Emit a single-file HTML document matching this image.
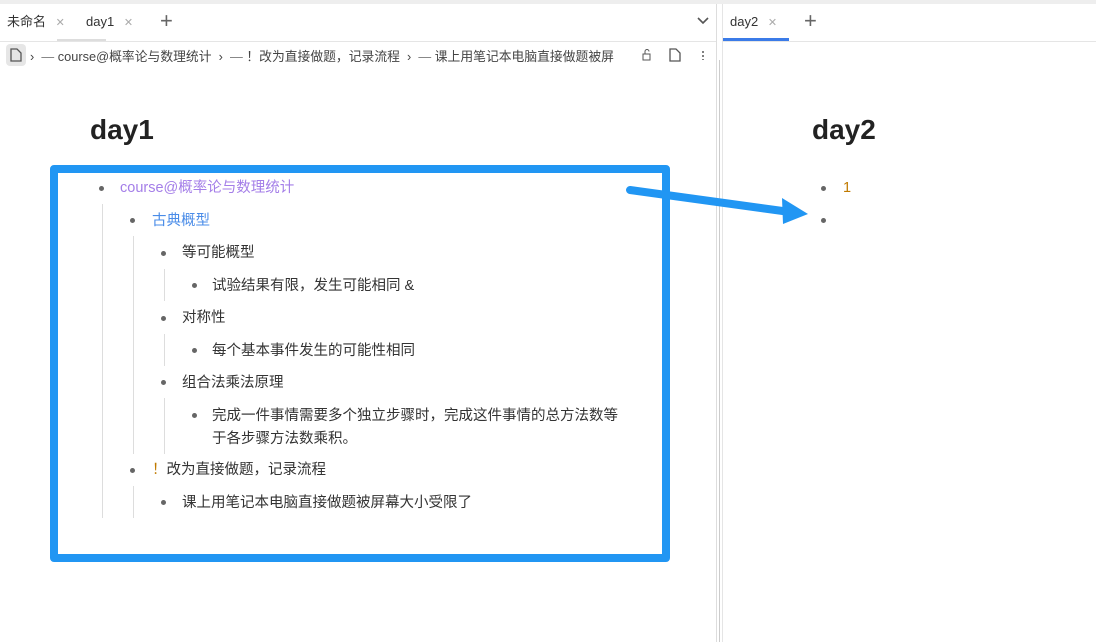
<!DOCTYPE html><html><head><meta charset="utf-8"><style>
body{margin:0;width:1096px;height:642px;overflow:hidden;background:#fff;font-family:"Liberation Sans","Noto Sans CJK SC",sans-serif;color:#333;position:relative}
.a{position:absolute;white-space:nowrap}
.t{font-size:14.5px;line-height:20px}
.dot{position:absolute;width:5px;height:5px;border-radius:50%;background:#666}
.vl{position:absolute;width:1px;background:#ddd}
</style></head><body>
<div class="a" style="left:0;top:0;width:1096px;height:4px;background:#eee"></div>
<div class="a" style="left:0;top:41px;width:717px;height:1px;background:#e5e5e5"></div>
<div class="a" style="left:722px;top:41px;width:374px;height:1px;background:#e5e5e5"></div>
<div class="a t" style="left:7px;top:12px;font-size:13px">未命名 <span style="color:#aaa;margin-left:6px;font-size:11px">✕</span></div>
<div class="a t" style="left:86px;top:12px;font-size:13px">day1 <span style="color:#aaa;margin-left:6px;font-size:11px">✕</span></div>
<div class="a" style="left:57px;top:39px;width:49px;height:2px;background:#ddd"></div>
<div class="a" style="left:160px;top:8px;font-size:22px;color:#666;font-weight:300">+</div>
<svg class="a" style="left:697px;top:17px" width="12" height="8"><path d="M1 1l5 5 5-5" fill="none" stroke="#555" stroke-width="1.6"/></svg>
<div class="a" style="left:716px;top:4px;width:1px;height:638px;background:#ddd"></div>
<div class="a" style="left:719px;top:60px;width:1px;height:582px;background:#ccc"></div>
<div class="a" style="left:722px;top:4px;width:1px;height:638px;background:#e5e5e5"></div>
<div class="a t" style="left:730px;top:12px;font-size:13px">day2 <span style="color:#aaa;margin-left:6px;font-size:11px">✕</span></div>
<div class="a" style="left:723px;top:38px;width:66px;height:3px;background:#3b7be8"></div>
<div class="a" style="left:804px;top:8px;font-size:22px;color:#666;font-weight:300">+</div>
<div class="a" style="left:6px;top:44px;width:20px;height:22px;background:#e6e6e6;border-radius:4px"></div>
<svg class="a" style="left:10px;top:48px" width="12" height="14"><path d="M1 1h6l4 4v8H1z" fill="none" stroke="#555" stroke-width="1.3"/></svg>
<div class="a" style="left:30px;top:46px;font-size:12.8px;color:#444">›&nbsp; <span style="color:#777">—</span> course@概率论与数理统计 &nbsp;›&nbsp; <span style="color:#777">—</span> ！改为直接做题，记录流程 &nbsp;›&nbsp; <span style="color:#777">—</span> 课上用笔记本电脑直接做题被屏</div>
<svg class="a" style="left:641px;top:49px" width="12" height="12"><rect x="2" y="5" width="7" height="6" fill="none" stroke="#555"/><path d="M4 5V2.5a2 2 0 0 1 4 0" fill="none" stroke="#555"/></svg>
<svg class="a" style="left:669px;top:48px" width="12" height="14"><path d="M1 1h6l4 4v8H1z" fill="none" stroke="#555" stroke-width="1.3"/></svg>
<div class="a" style="left:702px;top:50px;width:2px;height:10px;background:radial-gradient(circle,#555 1px,transparent 1px) 0 0/2px 4px"></div>
<div class="a" style="left:90px;top:114px;font-size:28px;font-weight:bold;color:#222">day1</div>
<div class="a" style="left:812px;top:114px;font-size:28px;font-weight:bold;color:#222">day2</div>
<div class="vl" style="left:102px;top:204px;height:314px"></div>
<div class="vl" style="left:133px;top:236px;height:218px"></div>
<div class="vl" style="left:133px;top:486px;height:32px"></div>
<div class="vl" style="left:164px;top:269px;height:32px"></div>
<div class="vl" style="left:164px;top:334px;height:32px"></div>
<div class="vl" style="left:164px;top:398px;height:56px"></div>
<div class="dot" style="left:99px;top:186px"></div><div class="a t" style="left:120px;top:178px;color:#a47ee8">course@概率论与数理统计</div>
<div class="dot" style="left:130px;top:218px"></div><div class="a t" style="left:152px;top:211px;color:#4a8ce8">古典概型</div>
<div class="dot" style="left:161px;top:251px"></div><div class="a t" style="left:182px;top:243px">等可能概型</div>
<div class="dot" style="left:192px;top:283px"></div><div class="a t" style="left:212px;top:276px">试验结果有限，发生可能相同 &amp;</div>
<div class="dot" style="left:161px;top:316px"></div><div class="a t" style="left:182px;top:308px">对称性</div>
<div class="dot" style="left:192px;top:348px"></div><div class="a t" style="left:212px;top:341px">每个基本事件发生的可能性相同</div>
<div class="dot" style="left:161px;top:380px"></div><div class="a t" style="left:182px;top:373px">组合法乘法原理</div>
<div class="dot" style="left:192px;top:413px"></div><div class="a t" style="left:212px;top:405px;line-height:23px">完成一件事情需要多个独立步骤时，完成这件事情的总方法数等<br>于各步骤方法数乘积。</div>
<div class="dot" style="left:130px;top:468px"></div><div class="a t" style="left:152px;top:460px"><span style="color:#c07a00">！</span>改为直接做题，记录流程</div>
<div class="dot" style="left:161px;top:500px"></div><div class="a t" style="left:182px;top:493px">课上用笔记本电脑直接做题被屏幕大小受限了</div>
<div class="dot" style="left:821px;top:186px"></div><div class="a t" style="left:843px;top:178px;color:#c07a00">1</div>
<div class="dot" style="left:821px;top:218px"></div>
<div class="a" style="left:50px;top:165px;width:604px;height:381px;border:8px solid #2196f3;border-radius:4px"></div>
<svg class="a" style="left:0;top:0" width="1096" height="642"><line x1="630" y1="190" x2="790" y2="212" stroke="#2196f3" stroke-width="8" stroke-linecap="round"/><path d="M782 198 L808 214 L783 224 Z" fill="#2196f3"/></svg>
</body></html>
